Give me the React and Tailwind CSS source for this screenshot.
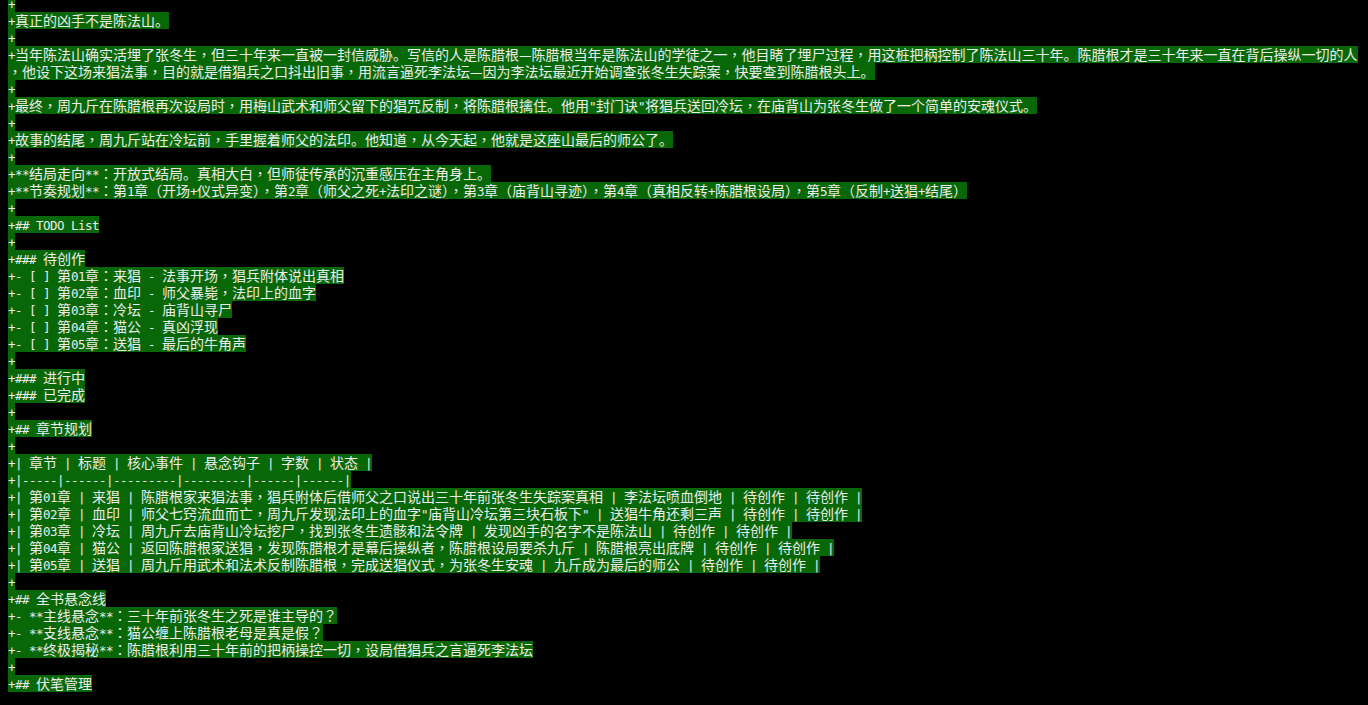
import React from "react";

// each entry is one terminal row (wrapped rows already split)
const LINES = [
  "+",
  "+真正的凶手不是陈法山。",
  "+",
  "+当年陈法山确实活埋了张冬生，但三十年来一直被一封信威胁。写信的人是陈腊根—陈腊根当年是陈法山的学徒之一，他目睹了埋尸过程，用这桩把柄控制了陈法山三十年。陈腊根才是三十年来一直在背后操纵一切的人",
  "，他设下这场来猖法事，目的就是借猖兵之口抖出旧事，用流言逼死李法坛—因为李法坛最近开始调查张冬生失踪案，快要查到陈腊根头上。",
  "+",
  "+最终，周九斤在陈腊根再次设局时，用梅山武术和师父留下的猖咒反制，将陈腊根擒住。他用\"封门诀\"将猖兵送回冷坛，在庙背山为张冬生做了一个简单的安魂仪式。",
  "+",
  "+故事的结尾，周九斤站在冷坛前，手里握着师父的法印。他知道，从今天起，他就是这座山最后的师公了。",
  "+",
  "+**结局走向**：开放式结局。真相大白，但师徒传承的沉重感压在主角身上。",
  "+**节奏规划**：第1章（开场+仪式异变），第2章（师父之死+法印之谜），第3章（庙背山寻迹），第4章（真相反转+陈腊根设局），第5章（反制+送猖+结尾）",
  "+",
  "+## TODO List",
  "+",
  "+### 待创作",
  "+- [ ] 第01章：来猖 - 法事开场，猖兵附体说出真相",
  "+- [ ] 第02章：血印 - 师父暴毙，法印上的血字",
  "+- [ ] 第03章：冷坛 - 庙背山寻尸",
  "+- [ ] 第04章：猫公 - 真凶浮现",
  "+- [ ] 第05章：送猖 - 最后的牛角声",
  "+",
  "+### 进行中",
  "+### 已完成",
  "+",
  "+## 章节规划",
  "+",
  "+| 章节 | 标题 | 核心事件 | 悬念钩子 | 字数 | 状态 |",
  "+|-----|------|---------|---------|------|------|",
  "+| 第01章 | 来猖 | 陈腊根家来猖法事，猖兵附体后借师父之口说出三十年前张冬生失踪案真相 | 李法坛喷血倒地 | 待创作 | 待创作 |",
  "+| 第02章 | 血印 | 师父七窍流血而亡，周九斤发现法印上的血字\"庙背山冷坛第三块石板下\" | 送猖牛角还剩三声 | 待创作 | 待创作 |",
  "+| 第03章 | 冷坛 | 周九斤去庙背山冷坛挖尸，找到张冬生遗骸和法令牌 | 发现凶手的名字不是陈法山 | 待创作 | 待创作 |",
  "+| 第04章 | 猫公 | 返回陈腊根家送猖，发现陈腊根才是幕后操纵者，陈腊根设局要杀九斤 | 陈腊根亮出底牌 | 待创作 | 待创作 |",
  "+| 第05章 | 送猖 | 周九斤用武术和法术反制陈腊根，完成送猖仪式，为张冬生安魂 | 九斤成为最后的师公 | 待创作 | 待创作 |",
  "+",
  "+## 全书悬念线",
  "+- **主线悬念**：三十年前张冬生之死是谁主导的？",
  "+- **支线悬念**：猫公缠上陈腊根老母是真是假？",
  "+- **终极揭秘**：陈腊根利用三十年前的把柄操控一切，设局借猖兵之言逼死李法坛",
  "+",
  "+## 伏笔管理",
];

// ascii -> half-width cells, fullwidth punct (centered glyphs) and cjk -> full-width cells
const SPLIT = /[\x00-\x7f]+|[，（）：？]+|[^\x00-\x7f，（）：？]+/g;

function Row({ text }) {
  const parts = text.match(SPLIT) || [];
  return (
    <div className="h-[17px] w-fit whitespace-pre bg-[#086808] font-['Noto_Sans_CJK_SC',sans-serif] text-[14px] leading-[17px] text-[#ececec]">
      {parts.map((p, i) => {
        if (/^[\x00-\x7f]/.test(p))
          return (
            <span key={i} className="font-['DejaVu_Sans_Mono',monospace] text-[12.5px] leading-none tracking-[-0.53px]">
              {p}
            </span>
          );
        if (/^[，（）：？]/.test(p))
          return (
            <span key={i} className="font-['Noto_Sans_CJK_TC',sans-serif]">
              {p}
            </span>
          );
        return <span key={i}>{p}</span>;
      })}
    </div>
  );
}

export default function App() {
  return (
    <div className="h-screen w-full overflow-hidden bg-black">
      <div className="-mt-[5px] flex flex-col pl-2">
        {LINES.map((line, i) => (
          <Row key={i} text={line} />
        ))}
      </div>
    </div>
  );
}
